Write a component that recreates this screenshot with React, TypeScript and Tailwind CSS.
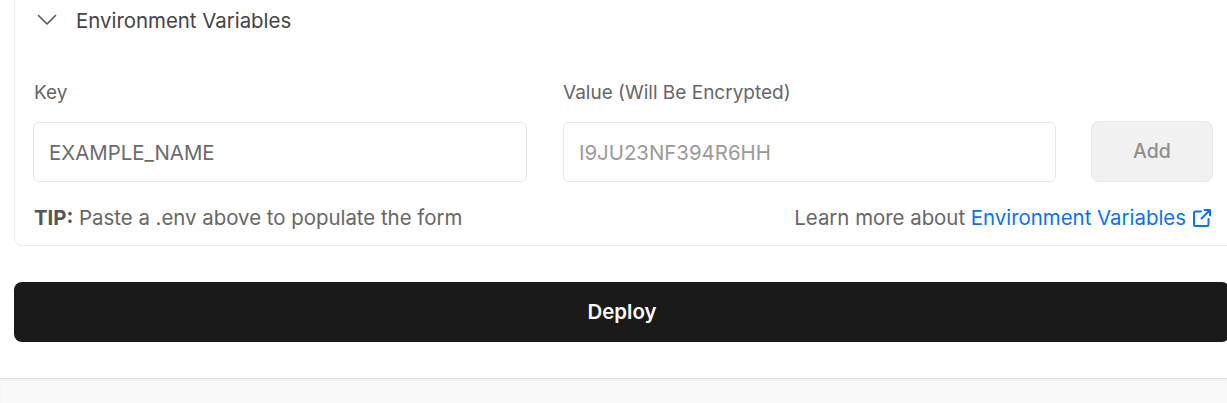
import React from "react";

const Chevron = () => (
  <svg width="24" height="24" viewBox="0 0 24 24" fill="none" className="shrink-0">
    <polyline points="4.5,6.5 13,15 21.5,6.5" stroke="#555" strokeWidth="1.6" strokeLinecap="round" strokeLinejoin="round" />
  </svg>
);

const ExternalLink = () => (
  <svg width="20" height="20" viewBox="0 0 20 20" fill="none" className="shrink-0">
    <path d="M9 3.5H3.5A1.5 1.5 0 0 0 2 5v11.5A1.5 1.5 0 0 0 3.5 18H15a1.5 1.5 0 0 0 1.5-1.5V11" stroke="#0a72ef" strokeWidth="2" strokeLinecap="round" />
    <path d="M12.5 2H18v5.5M18 2 9.5 10.5" stroke="#0a72ef" strokeWidth="2" strokeLinecap="round" strokeLinejoin="round" />
  </svg>
);

export default function App() {
  return (
    <div className="w-[1227px] h-[403px] overflow-hidden bg-white font-['Inter',sans-serif]">
      <div className="pl-[14px] w-[1250px]">
        <div className="w-[1220px] border border-t-0 border-[#ebebeb] rounded-b-[8px] px-[18px] pb-[15px]">
          <div className="h-[42px] flex items-center gap-[18px] pl-[1px]">
            <Chevron />
            <span className="text-[20.4px] text-[#444]">Environment Variables</span>
          </div>

          <div className="mt-[39px] flex items-end">
            <div className="w-[494px] shrink-0 flex flex-col">
              <label className="pl-[1px] text-[19px] leading-[24px] text-[#666] mb-[17px]">Key</label>
              <input
                defaultValue="EXAMPLE_NAME"
                className="h-[60px] rounded-[6px] border border-[#e6e6e6] px-[15px] text-[20.4px] text-[#6b6b6b] outline-none"
              />
            </div>
            <div className="w-[493px] shrink-0 ml-[36px] flex flex-col">
              <label className="text-[19px] leading-[24px] text-[#666] mb-[17px]">Value (Will Be Encrypted)</label>
              <input
                placeholder="I9JU23NF394R6HH"
                className="h-[60px] rounded-[6px] border border-[#e6e6e6] px-[15px] text-[20.4px] text-[#666] placeholder:text-[#9a9a9a] outline-none"
              />
            </div>
            <button className="ml-[35px] shrink-0 w-[122px] h-[61px] rounded-[8px] bg-[#f1f1f1] border border-[#e8e8e8] text-[19.5px] font-medium text-[#8f8f8f]">
              Add
            </button>
          </div>

          <div className="mt-[24px] w-[1180px] flex items-center justify-between text-[20.4px] leading-[24px] text-[#666]">
            <p className="pl-[1px]">
              <span className="font-bold text-[#555]">TIP:</span> Paste a .env above to populate the form
            </p>
            <p className="flex items-center gap-[6px] pr-[1px]">
              <span>
                Learn more about <span className="text-[#0a72ef]">Environment Variables</span>
              </span>
              <ExternalLink />
            </p>
          </div>
        </div>

        <button className="mt-[36px] w-[1216px] h-[60px] rounded-[8px] bg-[#1a1a1a] text-white text-[20.4px] font-semibold">
          Deploy
        </button>
      </div>

      <div className="mt-[36px] h-[40px] border-t border-[#e0e0e0] bg-[#f9f9f9] shadow-[inset_0_1px_2px_rgba(0,0,0,0.05)]" />
    </div>
  );
}
